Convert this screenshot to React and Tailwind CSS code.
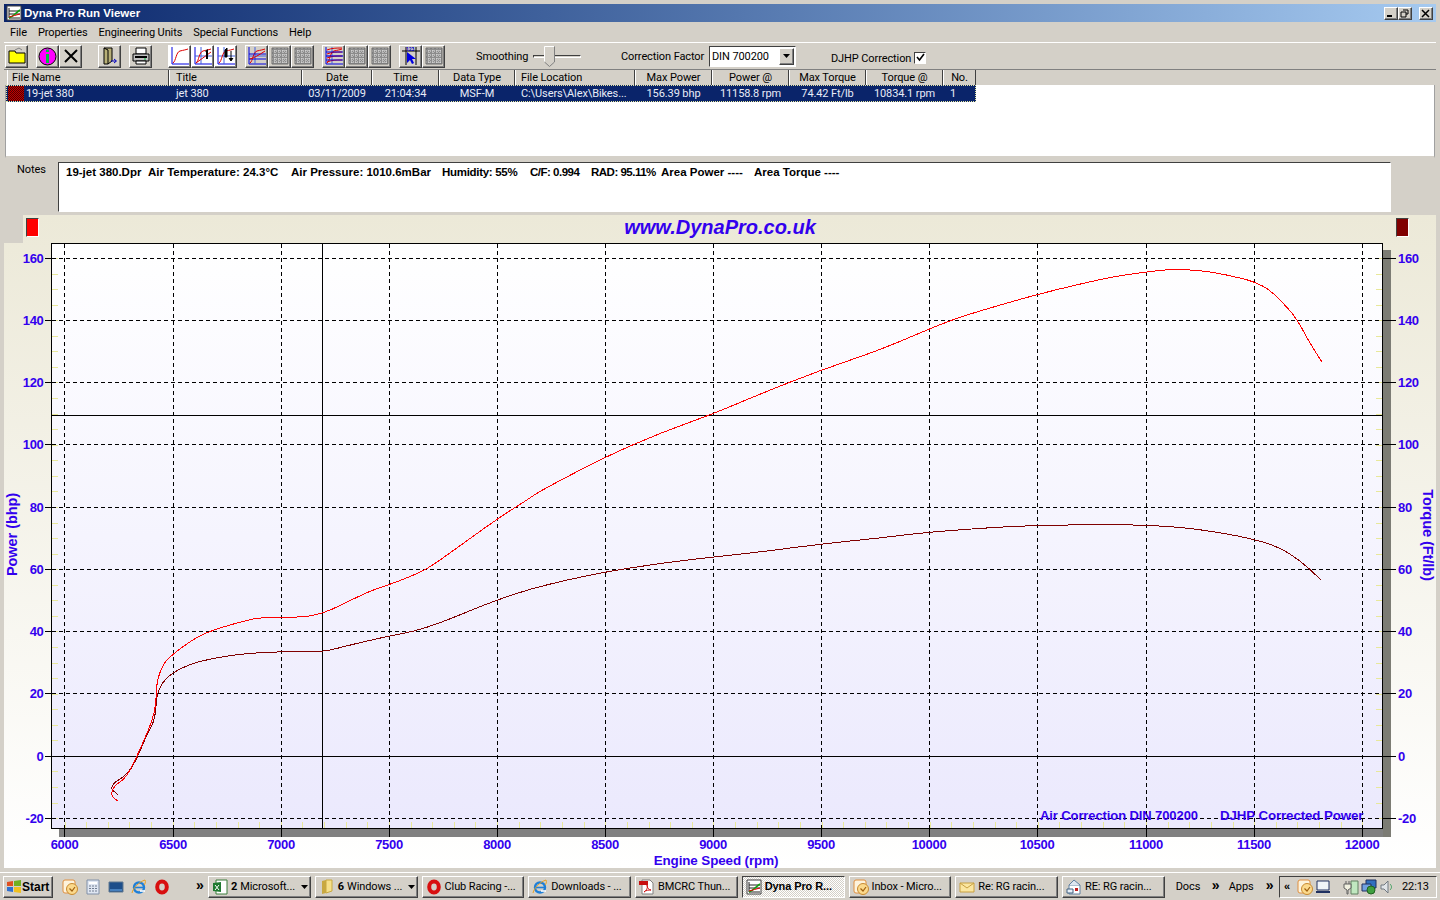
import React from "react";

const raised =
  "border border-t-white border-l-white border-r-[#404040] border-b-[#404040] shadow-[inset_-1px_-1px_0_#808080]";
const sunken =
  "border border-t-[#404040] border-l-[#404040] border-r-white border-b-white";
const bodyBold = "font-['Liberation_Sans',sans-serif] font-bold";

const columns = [
  { name: "File Name", w: "w-[162px]", cls: "pl-[4px]" },
  { name: "Title", w: "w-[133px]", cls: "pl-[6px]" },
  { name: "Date", w: "w-[70px]", cls: "justify-center" },
  { name: "Time", w: "w-[67px]", cls: "justify-center" },
  { name: "Data Type", w: "w-[76px]", cls: "justify-center" },
  { name: "File Location", w: "w-[120px]", cls: "pl-[5px]" },
  { name: "Max Power", w: "w-[77px]", cls: "justify-center" },
  { name: "Power @", w: "w-[77px]", cls: "justify-center" },
  { name: "Max Torque", w: "w-[77px]", cls: "justify-center" },
  { name: "Torque @", w: "w-[77px]", cls: "justify-center" },
  { name: "No.", w: "w-[33px]", cls: "justify-center" },
];

const rowCells = [
  { text: "jet 380", w: "w-[133px]", cls: "pl-[7px]" },
  { text: "03/11/2009", w: "w-[70px]", cls: "text-center" },
  { text: "21:04:34", w: "w-[67px]", cls: "text-center" },
  { text: "MSF-M", w: "w-[76px]", cls: "text-center" },
  { text: "C:\\Users\\Alex\\Bikes...", w: "w-[120px]", cls: "pl-[6px]" },
  { text: "156.39 bhp", w: "w-[77px]", cls: "text-center" },
  { text: "11158.8 rpm", w: "w-[77px]", cls: "text-center" },
  { text: "74.42 Ft/lb", w: "w-[77px]", cls: "text-center" },
  { text: "10834.1 rpm", w: "w-[77px]", cls: "text-center" },
  { text: "1", w: "w-[33px]", cls: "pl-[7px]" },
];

const notes = [
  { text: "19-jet 380.Dpr", w: "w-[82px]", cls: "" },
  { text: "Air Temperature: 24.3°C", w: "w-[143px]", cls: "" },
  { text: "Air Pressure: 1010.6mBar", w: "w-[151px]", cls: "" },
  { text: "Humidity: 55%", w: "w-[88px]", cls: "tracking-[-0.3px]" },
  { text: "C/F: 0.994", w: "w-[61px]", cls: "tracking-[-0.5px]" },
  { text: "RAD: 95.11%", w: "w-[70px]", cls: "tracking-[-0.5px]" },
  { text: "Area Power ----", w: "w-[93px]", cls: "" },
  { text: "Area Torque ----", w: "w-[100px]", cls: "" },
];

const xLabels = [
  [6000, 64.5], [6500, 173], [7000, 281], [7500, 389], [8000, 497], [8500, 605], [9000, 713],
  [9500, 821], [10000, 929], [10500, 1037], [11000, 1146], [11500, 1254], [12000, 1362],
];
const yLabels = [
  [160, 258], [140, 320], [120, 382], [100, 444], [80, 507], [60, 569], [40, 631], [20, 693], [0, 756], [-20, 818],
];

const powerCurve = [
  [117.7, 801], [111.7, 796.7], [111.7, 791.7], [115, 785], [123.3, 780], [129.3, 771.7], [136.7, 756.7], [145, 738],
  [151.7, 721.7], [155.7, 706.7], [156.7, 683.3], [160, 671.7], [165, 661.7], [173.3, 654], [191.7, 640], [210, 631],
  [240, 622], [262, 617], [300, 617.5], [322, 614], [343, 604], [370, 591], [389, 584.7], [406.7, 578], [426.7, 569.3],
  [450, 553], [497, 519], [527, 500], [540, 491], [605, 457], [660, 433], [713, 414], [760, 394], [821, 370], [880, 350],
  [929, 329], [960, 317], [1000, 305], [1037.7, 294.3], [1080, 284], [1116.7, 276], [1146.7, 272], [1170, 269.3],
  [1188, 269.7], [1213, 272], [1240, 278], [1255, 282], [1270, 290], [1286.7, 306.7], [1298, 320.7], [1308, 340], [1321.7, 361.7],
];
const torqueCurve = [
  [117.7, 794.3], [111.7, 790], [111.7, 786.7], [115, 781.7], [123.3, 777.3], [131.7, 768.3], [138.3, 755], [146.7, 735],
  [155, 720], [156.7, 695], [161.7, 683.3], [171.7, 673.3], [190, 664], [210, 659], [240, 654], [280, 651.5], [322, 652.3],
  [350, 645], [389, 636], [413, 631.7], [440, 623], [470, 610.7], [497, 600], [530, 589], [566.7, 580], [605, 572],
  [660, 563.3], [713, 557], [760, 552], [821, 544], [880, 538], [929, 532], [1000, 527], [1037, 525.5], [1100, 524.5],
  [1146, 525], [1190, 528], [1240, 536], [1275, 545], [1300, 560], [1321, 580],
];

// rounds the corners of the traced points so the run lines look continuous
const smoothPath = (pts) => {
  let d = `M${pts[0][0]} ${pts[0][1]}`;
  for (let i = 1; i < pts.length - 1; i++) {
    const mx = (pts[i][0] + pts[i + 1][0]) / 2;
    const my = (pts[i][1] + pts[i + 1][1]) / 2;
    d += `Q${pts[i][0]} ${pts[i][1]} ${mx} ${my}`;
  }
  const last = pts[pts.length - 1];
  return `${d}L${last[0]} ${last[1]}`;
};

const ChartIcon = ({ variant }) => (
  <svg width="20" height="20" viewBox="0 0 20 20">
    <path d="M2 1V18H19" fill="none" stroke="#0000e0" />
    {variant > 0 && <path d="M2 10H19M8 1V18" fill="none" stroke="#4060e0" />}
    <path d="M3 17C6 15 6 6 10 5S15 4 18 3" fill="none" stroke="#e00000" />
    {variant === 1 && <path d="M3 17L18 6" fill="none" stroke="#e00000" />}
    {variant === 1 && <path d="M12 5L15 3V13H13V6Z" fill="#000" />}
    {variant === 2 && <path d="M9 4L11 2V11H9ZM15 5V14M13 12L15 15L17 12" fill="#000" stroke="#000" />}
    {variant === 3 && <path d="M2 13H19M2 8H19" fill="none" stroke="#0000e0" />}
    {variant === 3 && <path d="M3 13C7 12 12 9 18 5" fill="none" stroke="#e00000" />}
    {variant === 4 && <path d="M3 4C8 2 12 2 18 2M3 8C8 6 12 6 18 6M3 12C8 10 12 10 18 10M3 16C8 14 12 14 18 14" fill="none" stroke="#e00000" />}
    {variant === 4 && <path d="M2 6H19M2 10H19M2 14H19" fill="none" stroke="#0000e0" />}
  </svg>
);

const GreyIcon = () => (
  <svg width="20" height="20" viewBox="0 0 20 20">
    <path d="M2 2H18V18H2Z" fill="#8c8c8c" />
    <path d="M2 5H18M2 9H18M2 13H18M2 16H18M5 2V18M9 2V18M13 2V18M16 2V18" stroke="#e8e8e8" strokeDasharray="1 1" />
    <path d="M2 2H18V18H2Z" fill="none" stroke="#707070" />
  </svg>
);

const ToolButton = ({ children, className = "" }) => (
  <div className={`w-[23px] h-[23px] flex items-center justify-center shrink-0 ${raised} ${className}`}>{children}</div>
);

const WindowButton = ({ children, className = "" }) => (
  <div className={`w-[14px] h-[13px] bg-[#d4d0c8] flex items-center justify-center ${raised} ${className}`}>
    <svg width="10" height="9" viewBox="0 0 10 9" fill="none" stroke="#000">{children}</svg>
  </div>
);

const DynaIcon = () => (
  <svg width="16" height="16" viewBox="0 0 16 16">
    <path d="M1 1H15V15H1Z" fill="#fff" stroke="#404040" />
    <path d="M3 3V13H14M3 6H14M3 9H14" fill="none" stroke="#202020" />
    <path d="M3 13C7 12 9 8 14 5" fill="none" stroke="#10a010" strokeWidth="1.5" />
    <path d="M3 12C7 11 10 10 14 9" fill="none" stroke="#e00000" />
  </svg>
);

const OutlookIcon = () => (
  <svg width="16" height="16" viewBox="0 0 16 16">
    <rect x="1" y="1" width="12" height="13" rx="2" fill="#fdf3dc" stroke="#e09040" />
    <circle cx="10" cy="10" r="5.5" fill="#fbd98c" stroke="#c88a30" />
    <path d="M7.5 9.5L10 12L13 8" fill="none" stroke="#a06010" strokeWidth="1.2" />
  </svg>
);

const IeIcon = () => (
  <svg width="16" height="16" viewBox="0 0 16 16">
    <circle cx="8" cy="8.5" r="5" fill="none" stroke="#1e7fd8" strokeWidth="2.4" />
    <path d="M4 8.5H12" stroke="#1e7fd8" strokeWidth="1.6" />
    <path d="M9 12H14" stroke="#fff" strokeWidth="1.6" />
    <path d="M1 14C2 9 8 3 14 1C15 3 14 5 13 6" fill="none" stroke="#e8a020" />
  </svg>
);

const OperaIcon = () => (
  <svg width="16" height="16" viewBox="0 0 16 16">
    <ellipse cx="8" cy="8" rx="4.8" ry="5.4" fill="none" stroke="#d80f0f" strokeWidth="4" />
  </svg>
);

const ExcelIcon = () => (
  <svg width="16" height="16" viewBox="0 0 16 16">
    <path d="M4 1H15V15H4Z" fill="#fff" stroke="#3b7d3b" />
    <path d="M1 4L9 3V13L1 12Z" fill="#1f7a30" />
    <path d="M3 6L7 11M7 6L3 11" stroke="#fff" />
  </svg>
);

const FolderIcon = () => (
  <svg width="16" height="16" viewBox="0 0 16 16">
    <path d="M3 2L7 1V14L3 15Z" fill="#c8a840" />
    <path d="M7 1H13V12L7 14Z" fill="#f6e08a" stroke="#c8a840" />
  </svg>
);

const PdfIcon = () => (
  <svg width="16" height="16" viewBox="0 0 16 16">
    <path d="M3 1H11L14 4V15H3Z" fill="#fff" stroke="#808080" />
    <path d="M0 2H9V6H0Z" fill="#c80f0f" />
    <path d="M5 13C8 11 9 8 8 6C8 9 10 11 12 11C10 11 7 11 5 13Z" fill="none" stroke="#d01010" />
  </svg>
);

const MailIcon = () => (
  <svg width="16" height="16" viewBox="0 0 16 16">
    <path d="M1 4H15V13H1Z" fill="#fbe6a0" stroke="#c8a040" />
    <path d="M1 4L8 9L15 4" fill="none" stroke="#c8a040" />
  </svg>
);

const ReplyIcon = () => (
  <svg width="16" height="16" viewBox="0 0 16 16">
    <path d="M3 6H14V15H3Z" fill="#fff" stroke="#6080a0" />
    <path d="M3 6L8 1L14 6" fill="#dde6f0" stroke="#6080a0" />
    <path d="M1 10H7V14H1Z" fill="#e8f0f8" stroke="#406080" />
    <path d="M9 9H12V12H9Z" fill="#c02020" />
  </svg>
);

const taskButtons = [
  { icon: <ExcelIcon />, text: "Microsoft...", count: "2", arrow: true },
  { icon: <FolderIcon />, text: "Windows ...", count: "6", arrow: true },
  { icon: <OperaIcon />, text: "Club Racing -..." },
  { icon: <IeIcon />, text: "Downloads - ..." },
  { icon: <PdfIcon />, text: "BMCRC Thun..." },
  { icon: <DynaIcon />, text: "Dyna Pro R...", active: true },
  { icon: <OutlookIcon />, text: "Inbox - Micro..." },
  { icon: <MailIcon />, text: "Re: RG racin..." },
  { icon: <ReplyIcon />, text: "RE: RG racin..." },
];

const Chevrons = ({ className = "" }) => (
  <span className={`mb-[3px] text-[14px] ${bodyBold} ${className}`}>»</span>
);

const Chart = () => (
  <svg
    width="1432"
    height="625"
    viewBox="4 243 1432 625"
    className="block"
    fontFamily="'Liberation Sans', sans-serif"
    shapeRendering="crispEdges"
  >
    <defs>
      <linearGradient id="plotBg" x1="0" y1="0" x2="0" y2="1">
        <stop offset="0" stopColor="#ffffff" />
        <stop offset="1" stopColor="#ebe9fd" />
      </linearGradient>
    </defs>
    {/* shadow behind the plot */}
    <rect x="59" y="828" width="1332" height="9" fill="#808080" />
    <rect x="1383" y="250" width="8" height="587" fill="#7c7c74" />
    <rect x="51.5" y="243.5" width="1331" height="585" fill="url(#plotBg)" />

    {/* minor ticks */}
    {Array.from({ length: 37 }, (_, i) => 258 + i * 15.56).map((y) => (
      <g key={y} stroke="#e8e89a">
        <path d={`M52 ${Math.round(y) + 0.5}H58`} />
        <path d={`M1376 ${Math.round(y) + 0.5}H1382`} />
      </g>
    ))}
    {Array.from({ length: 61 }, (_, i) => 64.5 + i * 21.63).map((x) => (
      <path key={x} d={`M${Math.round(x) + 0.5} 822V828`} stroke="#e8e89a" />
    ))}

    {/* grid */}
    {xLabels.map(([v, x]) => (
      <g key={v}>
        <path d={`M${Math.floor(x) + 0.5} 244V828`} stroke="#000" strokeDasharray="4 3" />
        <path d={`M${Math.floor(x) + 0.5} 828V837`} stroke="#000" />
        <text x={x} y="849" textAnchor="middle" fontSize="13" fontWeight="700" letterSpacing="-0.3" fill="#3300ee">{v}</text>
      </g>
    ))}
    {yLabels.map(([v, y]) => (
      <g key={v}>
        {v !== 0 && <path d={`M52 ${y + 0.5}H1383`} stroke="#000" strokeDasharray="4 3" />}
        <path d={`M45 ${y + 0.5}H52M1383 ${y + 0.5}H1396`} stroke="#000" />
        <text x="43.5" y={y + 5} textAnchor="end" fontSize="13" fontWeight="700" letterSpacing="-0.3" fill="#3300ee">{v}</text>
        <text x="1398" y={y + 5} fontSize="13" fontWeight="700" letterSpacing="-0.3" fill="#3300ee">{v}</text>
      </g>
    ))}
    <path d="M52 756.5H1383M52 415.5H1383M322.5 244V828" stroke="#000" />
    <rect x="51.5" y="243.5" width="1331" height="585" fill="none" stroke="#000" />

    {/* curves */}
    <g fill="none" strokeWidth="1">
      <path d={smoothPath(torqueCurve)} stroke="#800000" />
      <path d={smoothPath(powerCurve)} stroke="#ff0000" />
    </g>

    {/* axis titles */}
    <g shapeRendering="auto" fill="#3300ee" fontWeight="700">
      <text x="716" y="865" textAnchor="middle" fontSize="13.4">Engine Speed (rpm)</text>
      <text x="17" y="534.5" textAnchor="middle" fontSize="14.6" transform="rotate(-90 17 534.5)">Power (bhp)</text>
      <text x="1423" y="535" textAnchor="middle" fontSize="14.6" transform="rotate(90 1423 535)">Torque (Ft/lb)</text>
      <text x="1040" y="820" fontSize="13">Air Correction DIN 700200</text>
      <text x="1220" y="820" fontSize="13.3">DJHP Corrected Power</text>
    </g>
  </svg>
);

export default function App() {
  return (
    <div className="w-[1440px] h-[900px] overflow-hidden flex flex-col bg-[#d4d0c8] text-black text-[11px] tracking-[-0.1px] leading-none font-['Roboto',sans-serif]">
      {/* window */}
      <div className="h-[872px] pt-[4px] px-[4px] flex flex-col shrink-0">
        <div className="h-[18px] shrink-0 flex items-center bg-gradient-to-r from-[#0a246a] to-[#a6caf0] pl-[2px] pr-[3px]">
          <DynaIcon />
          <span className={`ml-[2px] pt-[1px] text-white text-[11.5px] tracking-normal ${bodyBold}`}>Dyna Pro Run Viewer</span>
          <div className="ml-auto flex items-center">
            <WindowButton><path d="M1 7H6" strokeWidth="2" /></WindowButton>
            <WindowButton><path d="M3 1H8V5H6M1 3H6V8H1Z" /></WindowButton>
            <WindowButton className="ml-[7px]"><path d="M1 1L8 8M8 1L1 8" strokeWidth="1.5" /></WindowButton>
          </div>
        </div>

        <div className="h-[20px] shrink-0 flex items-center pl-[6px] gap-[11px] pt-[1px]">
          <span>File</span>
          <span>Properties</span>
          <span>Engineering Units</span>
          <span>Special Functions</span>
          <span>Help</span>
        </div>

        {/* toolbar */}
        <div className="h-[27px] shrink-0 flex items-center border-t border-t-white pl-[1px]">
          <ToolButton>
            <svg width="20" height="18" viewBox="0 0 20 18">
              <path d="M2 6V4H8L9 6H18V16H2Z" fill="#ffff00" stroke="#000" />
              <path d="M8 3L12 1L15 3" fill="none" stroke="#808080" />
            </svg>
          </ToolButton>
          <ToolButton className="ml-[8px]">
            <svg width="19" height="19" viewBox="0 0 19 19">
              <circle cx="9.5" cy="9.5" r="8.5" fill="#ff00ff" stroke="#000" />
              <path d="M8 7H11V16H8Z" fill="#00c040" />
              <path d="M8 2.5H11V5H8Z" fill="#00c040" />
            </svg>
          </ToolButton>
          <ToolButton>
            <svg width="16" height="16" viewBox="0 0 16 16">
              <path d="M2 2L14 14M14 2L2 14" stroke="#000" strokeWidth="2" />
            </svg>
          </ToolButton>
          <ToolButton className="ml-[16px]">
            <svg width="20" height="20" viewBox="0 0 20 20">
              <path d="M4 2H12V15L8 18H4Z" fill="#b8b078" stroke="#000" />
              <path d="M4 2L8 4V18" fill="none" stroke="#000" />
              <path d="M11 15H16M14 13L16.5 15L14 17" fill="none" stroke="#0000c0" />
            </svg>
          </ToolButton>
          <ToolButton className="ml-[8px]">
            <svg width="20" height="18" viewBox="0 0 20 18">
              <path d="M5 1H15V7H5Z" fill="#fff" stroke="#000" />
              <path d="M2 7H18V14H2Z" fill="#c0c0c0" stroke="#000" />
              <path d="M5 14H15V17H5Z" fill="#fff" stroke="#000" />
              <path d="M4 10H16" stroke="#000" strokeWidth="2" />
              <path d="M13 12H15" stroke="#00c040" />
            </svg>
          </ToolButton>
          <ToolButton className="ml-[16px] bg-white"><ChartIcon variant={0} /></ToolButton>
          <ToolButton className="bg-white"><ChartIcon variant={1} /></ToolButton>
          <ToolButton className="bg-white"><ChartIcon variant={2} /></ToolButton>
          <ToolButton className="ml-[8px]"><ChartIcon variant={3} /></ToolButton>
          <ToolButton><GreyIcon /></ToolButton>
          <ToolButton><GreyIcon /></ToolButton>
          <ToolButton className="ml-[8px]"><ChartIcon variant={4} /></ToolButton>
          <ToolButton><GreyIcon /></ToolButton>
          <ToolButton><GreyIcon /></ToolButton>
          <ToolButton className="ml-[8px]">
            <svg width="20" height="20" viewBox="0 0 20 20">
              <path d="M1 5H19M5 1V19M15 1V19" stroke="#000" fill="none" />
              <path d="M6 6V17L9 14L11 18L13 17L11 13H15Z" fill="#0000e0" />
              <text x="5" y="4.5" fontSize="5" fontWeight="700" fill="#0000c0">123</text>
            </svg>
          </ToolButton>
          <ToolButton><GreyIcon /></ToolButton>

          <span className="ml-[31px] w-[51px]">Smoothing</span>
          <div className="relative ml-[6px] w-[48px] h-[20px] flex items-center">
            <div className={`w-full h-[3px] ${sunken}`} />
            <svg className="absolute left-[11px] top-0" width="11" height="21" viewBox="0 0 11 21">
              <path d="M0.5 0.5H10.5V16L5.5 20.5L0.5 16Z" fill="#d4d0c8" />
              <path d="M0.5 16V0.5H10" fill="none" stroke="#fff" />
              <path d="M10.5 0.5V16L5.5 20.5L0.5 16" fill="none" stroke="#808080" />
            </svg>
          </div>

          <span className="ml-[40px] w-[82px] whitespace-nowrap">Correction Factor</span>
          <div className={`ml-[6px] w-[87px] h-[21px] bg-white flex items-center pl-[2px] pr-[1px] ${sunken}`}>
            <span>DIN 700200</span>
            <div className={`ml-auto w-[15px] h-[17px] bg-[#d4d0c8] flex items-center justify-center ${raised}`}>
              <svg width="7" height="4" viewBox="0 0 7 4"><path d="M0 0H7L3.5 4Z" fill="#000" /></svg>
            </div>
          </div>

          <span className="ml-[35px] mt-[5px] w-[80px] whitespace-nowrap">DJHP Correction</span>
          <div className={`ml-[3px] mt-[3px] w-[12px] h-[12px] bg-white flex items-center justify-center ${sunken}`}>
            <svg width="9" height="9" viewBox="0 0 9 9"><path d="M1 4L3.5 7L8 1" fill="none" stroke="#000" strokeWidth="1.6" /></svg>
          </div>
        </div>

        {/* run list */}
        <div className="h-[16px] shrink-0 flex bg-[#d4d0c8] border-t border-t-[#808080] pl-[3px]">
          {columns.map((c) => (
            <div key={c.name} className={`${c.w} h-full flex items-center pb-[1px] ${c.cls} border-r border-r-[#404040] border-l border-l-white`}>
              {c.name}
            </div>
          ))}
        </div>
        <div className="h-[73px] shrink-0 mx-[1px] bg-white border-b-2 border-b-[#d4d0c8] border-l border-l-[#a0a0a0] border-r border-r-[#a0a0a0]">
          <div className="w-[970px] h-[17px] flex items-center bg-[#0a246a] text-[#e8ecf8] outline-1 -outline-offset-1 outline-dotted outline-[#e8e8a0]">
            <div className="w-[163px] flex items-center pl-[2px]">
              <div className="w-[16px] h-[15px] mr-[2px] bg-[repeating-conic-gradient(#c00000_0%_25%,#500000_0%_50%)] bg-[length:2px_2px]" />
              <span>19-jet 380</span>
            </div>
            {rowCells.map((c) => (
              <div key={c.text} className={`${c.w} ${c.cls} whitespace-nowrap`}>{c.text}</div>
            ))}
          </div>
        </div>

        {/* notes */}
        <div className="h-[57px] shrink-0 flex pl-[13px] pr-[45px] pt-[4px]">
          <span className="w-[41px] pt-[2px]">Notes</span>
          <div className={`flex-1 h-[50px] bg-white pl-[7px] pt-[4px] flex text-[11.5px] tracking-normal ${bodyBold} ${sunken}`}>
            {notes.map((n) => (
              <span key={n.text} className={`${n.w} ${n.cls} whitespace-nowrap`}>{n.text}</span>
            ))}
          </div>
        </div>

        {/* graph panel */}
        <div className="h-[653px] shrink-0 flex flex-col bg-gradient-to-b from-[#ece9d8] to-white">
          <div className="h-[28px] shrink-0 flex items-start">
            <div className="w-[19px] h-full bg-[#d4d0c8]" />
            <div className={`ml-[3px] mt-[3px] w-[13px] h-[19px] bg-[#ff0000] ${sunken}`} />
            <span className={`flex-1 mt-[2px] pl-[5px] text-center text-[20px] tracking-normal italic text-[#3300ee] ${bodyBold}`}>www.DynaPro.co.uk</span>
            <div className={`mr-[27px] mt-[3px] w-[13px] h-[19px] bg-[#800000] ${sunken}`} />
          </div>
          <Chart />
        </div>
      </div>

      {/* taskbar */}
      <div className="h-[28px] shrink-0 flex items-center border-t border-t-white pl-[3px] pr-[3px]">
        <div className={`w-[50px] h-[22px] flex items-center pl-[2px] text-[12px] tracking-normal ${bodyBold} ${raised}`}>
          <svg width="16" height="16" viewBox="0 0 16 16">
            <path d="M1 3L7 2V7H1Z" fill="#e05020" />
            <path d="M8 2L15 1V7H8Z" fill="#70b020" />
            <path d="M1 8H7V13L1 12Z" fill="#3070d0" />
            <path d="M8 8H15V14L8 13Z" fill="#f0c020" />
          </svg>
          Start
        </div>
        <div className="flex items-center gap-[7px] ml-[9px]">
          <OutlookIcon />
          <svg width="16" height="16" viewBox="0 0 16 16">
            <path d="M2 1H14V15H2Z" fill="#dfe6f2" stroke="#8090a8" />
            <path d="M4 3H12V5H4Z" fill="#fff" />
            <path d="M4 7H12M4 9.5H12M4 12H12" stroke="#707c90" strokeDasharray="2 1" />
          </svg>
          <svg width="16" height="16" viewBox="0 0 16 16">
            <path d="M1 3H15V13H1Z" fill="#1d4e8a" stroke="#607890" />
            <path d="M2 11H14" stroke="#70b0f0" />
          </svg>
          <IeIcon />
          <OperaIcon />
        </div>
        <Chevrons className="ml-[26px] w-[7px]" />
        <div className="flex gap-[4px] ml-[5px]">
          {taskButtons.map((b) => (
            <div
              key={b.text}
              className={`w-[102.75px] h-[22px] flex items-center gap-[3px] pl-[3px] whitespace-nowrap ${
                b.active
                  ? `${sunken} ${bodyBold} bg-[repeating-conic-gradient(#ffffff_0%_25%,#d4d0c8_0%_50%)] bg-[length:2px_2px]`
                  : raised
              }`}
            >
              {b.icon}
              {b.count && <b>{b.count}</b>}
              <span>{b.text}</span>
              {b.arrow && (
                <svg className="ml-auto mr-[2px]" width="7" height="4" viewBox="0 0 7 4"><path d="M0 0H7L3.5 4Z" fill="#000" /></svg>
              )}
            </div>
          ))}
        </div>
        <span className="ml-[11px] w-[24px]">Docs</span>
        <Chevrons className="ml-[12px] w-[8px]" />
        <span className="ml-[9px] w-[24px]">Apps</span>
        <Chevrons className="ml-[13px] w-[8px]" />
        <div className={`ml-auto w-[158px] h-[22px] flex items-center pl-[4px] ${sunken}`}>
          <span className={`w-[7px] ${bodyBold}`}>«</span>
          <div className="ml-[6px]"><OutlookIcon /></div>
          <svg className="ml-[2px]" width="16" height="16" viewBox="0 0 16 16">
            <path d="M2 2H14V11H2Z" fill="#f0f4f8" stroke="#203060" />
            <path d="M1 13H15" stroke="#203060" strokeWidth="2" />
          </svg>
          <svg className="ml-[12px]" width="16" height="16" viewBox="0 0 16 16">
            <path d="M8 2H15V15H8Z" fill="#c0e8c0" stroke="#608060" />
            <path d="M3 2V5M6 2V5M1 5H8V9L5 11V15H4V11L1 9Z" fill="#f0f0e0" stroke="#606060" />
          </svg>
          <svg className="ml-[2px]" width="16" height="16" viewBox="0 0 16 16">
            <path d="M5 1H15V9H5Z" fill="#3070c0" stroke="#203060" />
            <path d="M1 5H10V12H1Z" fill="#70a0e0" stroke="#203060" />
            <circle cx="10" cy="11" r="4" fill="#40a040" stroke="#206020" />
          </svg>
          <svg className="ml-[2px]" width="16" height="16" viewBox="0 0 16 16">
            <path d="M2 6H5L9 2V14L5 10H2Z" fill="#e0e4e8" stroke="#707880" />
            <path d="M11 5C13 7 13 9 11 11" fill="none" stroke="#40a060" />
          </svg>
          <span className="ml-[7px]">22:13</span>
        </div>
      </div>
    </div>
  );
}
